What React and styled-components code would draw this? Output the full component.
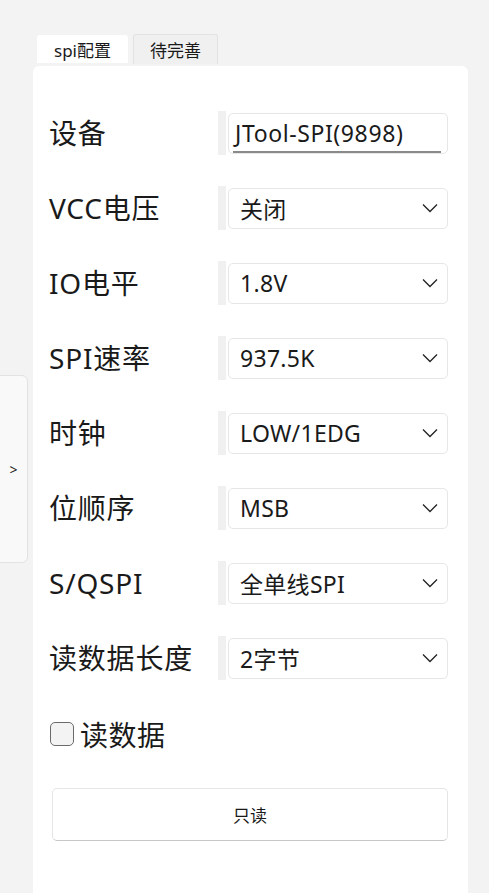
import React from "react";
import styled, { createGlobalStyle } from "styled-components";

const Global = createGlobalStyle`
  html, body { margin: 0; padding: 0; background: #f3f3f3; }
  body { font-family: "Noto Sans", "Noto Sans CJK SC", sans-serif; color: #1a1a1a; }
  * { box-sizing: border-box; }
`;

const Page = styled.div`
  position: relative;
  width: 489px;
  height: 893px;
  overflow: hidden;
  padding: 34px 0 0 33px;
`;

const Tabs = styled.div`
  display: flex;
  gap: 5px;
  padding-left: 4px;
  height: 32px;
`;

const Tab = styled.div`
  height: ${(p) => (p.$active ? "28px" : "30px")};
  margin-top: ${(p) => (p.$active ? "1px" : "0")};
  width: ${(p) => (p.$active ? "91px" : "85px")};
  display: flex;
  align-items: center;
  justify-content: center;
  font-size: 17px;
  border-radius: 3px 3px 0 0;
  background: ${(p) => (p.$active ? "#ffffff" : "#f0f0f0")};
  border: 1px solid ${(p) => (p.$active ? "#ffffff" : "#e2e2e2")};
  border-bottom: none;
`;

const Panel = styled.div`
  width: 435px;
  height: 900px;
  background: #ffffff;
  border-radius: 6px 6px 0 0;
  padding: 45px 20px 0 16px;
  display: flex;
  flex-direction: column;
  gap: 31px;
`;

const Row = styled.div`
  display: flex;
  align-items: center;
  height: 44px;
`;

const Label = styled.div`
  width: 169px;
  font-size: 28px;
  line-height: 1;
  white-space: nowrap;
  letter-spacing: 0.8px;
`;

const Bar = styled.div`
  width: 8px;
  height: 44px;
  background: #f0f0f0;
  margin-right: 2px;
`;

const Field = styled.div`
  position: relative;
  width: 220px;
  height: 41px;
  border: 1px solid #e6e6e6;
  border-radius: 5px;
  background: #ffffff;
  display: flex;
  align-items: center;
  padding: 0 ${(p) => (p.$input ? "6px" : "11px")};
  font-size: 23px;
  letter-spacing: ${(p) => (p.$input ? "0.6px" : "0.3px")};
  justify-content: space-between;
  white-space: nowrap;
`;

const Underline = styled.div`
  position: absolute;
  left: 4px;
  right: 6px;
  bottom: 0px;
  height: 2px;
  background: #8a8a8a;
`;

const Chevron = styled.svg`
  width: 16px;
  height: 10px;
  margin-right: -2px;
  flex: none;
`;

const CheckRow = styled.label`
  display: flex;
  align-items: center;
  gap: 6px;
  margin-top: 8px;
  font-size: 28px;
  letter-spacing: 0.5px;
  height: 30px;
`;

const Box = styled.span`
  width: 24px;
  height: 24px;
  border: 1.5px solid #6a6a6a;
  border-radius: 5px;
  background: #f3f3f3;
  margin-left: 1px;
`;

const Button = styled.div`
  margin: 39px 0 0 3px;
  width: 396px;
  height: 53px;
  border: 1px solid #e5e5e5;
  border-bottom: 1.5px solid #c8c8c8;
  border-radius: 5px;
  background: #ffffff;
  display: flex;
  align-items: center;
  justify-content: center;
  font-size: 17px;
`;

const SideHandle = styled.div`
  position: absolute;
  left: -1px;
  top: 375px;
  width: 29px;
  height: 188px;
  background: #f9f9f9;
  border: 1px solid #e2e2e2;
  border-radius: 0 6px 6px 0;
  display: flex;
  align-items: center;
  justify-content: center;
  font-size: 14px;
  padding-top: 1px;
`;

const rows = [
  ["VCC电压", "关闭"],
  ["IO电平", "1.8V"],
  ["SPI速率", "937.5K"],
  ["时钟", "LOW/1EDG"],
  ["位顺序", "MSB"],
  ["S/QSPI", "全单线SPI"],
  ["读数据长度", "2字节"],
];

export default function App() {
  return (
    <Page>
      <Global />
      <Tabs>
        <Tab $active>spi配置</Tab>
        <Tab>待完善</Tab>
      </Tabs>
      <Panel>
        <Row>
          <Label>设备</Label>
          <Bar />
          <Field $input>
            JTool-SPI(9898)
            <Underline />
          </Field>
        </Row>
        {rows.map(([l, v]) => (
          <Row key={l}>
            <Label>{l}</Label>
            <Bar />
            <Field>
              <span>{v}</span>
              <Chevron viewBox="0 0 16 10">
                <path d="M1 1.5 L8 8.5 L15 1.5" fill="none" stroke="#222" strokeWidth="1.3" />
              </Chevron>
            </Field>
          </Row>
        ))}
        <div>
          <CheckRow>
            <Box />
            读数据
          </CheckRow>
          <Button>只读</Button>
        </div>
      </Panel>
      <SideHandle>&gt;</SideHandle>
    </Page>
  );
}
